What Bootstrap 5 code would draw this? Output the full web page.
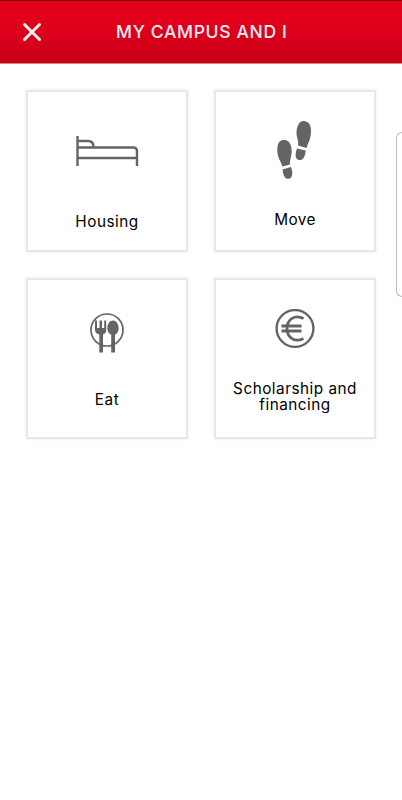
<!DOCTYPE html>
<html lang="en">
<head>
<meta charset="utf-8">
<meta name="viewport" content="width=device-width, initial-scale=1">
<title>My campus and I</title>
<link href="https://cdn.jsdelivr.net/npm/bootstrap@5.3.0/dist/css/bootstrap.min.css" rel="stylesheet">
<style>
body{font-family:Inter,"Liberation Sans",sans-serif;background:#fff;height:800px;overflow:hidden}
.topbar{height:64px;background:linear-gradient(#e4001b,#de001a 45%,#c90019);border-top:1px solid #7d000c;border-bottom:1px solid #df8088}
.close-btn{width:64px;border:0;background:none}
.title{font-size:17.5px;font-weight:500;letter-spacing:.67px;color:#ffeaf0;line-height:20px;padding-left:52px}
.tiles{padding:26px 26px 0;gap:26px}
.tile{width:162px;height:161.5px;border:2px solid #e8e8e8;border-radius:0;box-shadow:0 0 3px #e9e9e9}
.pic{display:block;color:#646464}
.label{font-size:15.3px;line-height:16px;letter-spacing:.5px;color:#000;text-align:center}
.bed-pic{margin-top:43px}.bed-label{margin-top:47px}
.feet-pic{margin-top:28px;margin-right:2px}.feet-label{margin-top:32px;letter-spacing:.4px}
.eat-pic{margin-top:32px}.eat-label{margin-top:38px}
.euro-pic{margin-top:29px}.euro-label{margin-top:32px}
.side-panel{left:396px;top:132px;width:6px;height:165px;border:1px solid #bdbdbd;border-right:0;border-radius:7px 0 0 7px;background:#fff}
</style>
<script src="https://cdn.jsdelivr.net/npm/bootstrap@5.3.0/dist/js/bootstrap.bundle.min.js"></script>
</head>
<body class="position-relative">
<header class="topbar d-flex align-items-center">
  <button class="close-btn p-0 d-flex justify-content-center" aria-label="Close">
    <svg width="20" height="20" viewBox="0 0 20 20" stroke="#ffeef2" stroke-width="3" stroke-linecap="round"><path d="M2.500 2.500 17.500 17.500M17.500 2.500 2.500 17.500"/></svg>
  </button>
  <h1 class="title m-0 flex-grow-1 text-nowrap">MY CAMPUS AND I</h1>
</header>
<main class="tiles d-flex flex-wrap">
  <a class="tile card align-items-center text-decoration-none">
    <svg class="pic bed-pic" width="64" height="32" viewBox="0 0 64 32" fill="none" stroke="currentColor" stroke-width="2.400"><path d="M2.500 1V31M2.500 6H13Q18.500 6 18.500 12M2.500 12.500H58Q62 12.500 62 16V31M2.500 23H62"/></svg>
    <span class="label bed-label">Housing</span>
  </a>
  <a class="tile card align-items-center text-decoration-none">
    <svg class="pic feet-pic" width="36" height="60" viewBox="0 0 36 60" fill="currentColor">
      <path d="M7 20C13 19 16 25 15.700 32C15.500 37 13.500 40 14 44.500L6.300 46.500C5 41 1.300 38 1.300 30C1.300 24 3 20.500 7 20Z"/>
      <path d="M6.500 49.500 15 47C17 52 16.800 58 13 58.800C8.500 59.500 7 54.500 6.500 49.500Z"/>
      <path d="M29 1.200C23 0 20.500 7 20.500 13C20.500 18 23 20 22 25.500L30.700 28C31.500 23 35 20 35 11C35 5 33 1.900 29 1.200Z"/>
      <path d="M21 28.500 29.700 30.500C29.200 36 27.500 40.300 23.500 40.100C18.500 39.800 19 33.500 21 28.500Z"/>
    </svg>
    <span class="label feet-label">Move</span>
  </a>
  <a class="tile card align-items-center text-decoration-none">
    <svg class="pic eat-pic" width="34" height="42" viewBox="0 0 34 42" fill="currentColor">
      <circle cx="17" cy="18" r="16" fill="none" stroke="currentColor" stroke-width="1.700"/>
      <path d="M5 8.500H7V16H9.500V8.500H12V16H14.200V8.500H16.200V18Q16.200 21.500 13 22.500V40.500H9.300V22.500Q5 21.500 5 18Z"/>
      <path d="M23 8.500C27 8.500 28.700 13 28.700 16.500C28.700 20 26.500 22 25 22.800V40.500H21.200V22.800C19.500 22 17.300 20 17.300 16.500C17.300 13 19 8.500 23 8.500Z"/>
    </svg>
    <span class="label eat-label">Eat</span>
  </a>
  <a class="tile card align-items-center text-decoration-none">
    <svg class="pic euro-pic" width="40" height="40" viewBox="0 0 40 40" fill="none" stroke="currentColor"><circle cx="20" cy="19.500" r="18.400" stroke-width="2.400"/><path d="M28.500 9.500C20 5 12 10.500 12 19.500C12 28.500 20 34 28.500 29.500M6.500 17H26.500M6.500 22H26.500" stroke-width="2.800"/></svg>
    <span class="label euro-label">Scholarship and<br>financing</span>
  </a>
</main>
<aside class="side-panel position-absolute"></aside>
</body>
</html>
